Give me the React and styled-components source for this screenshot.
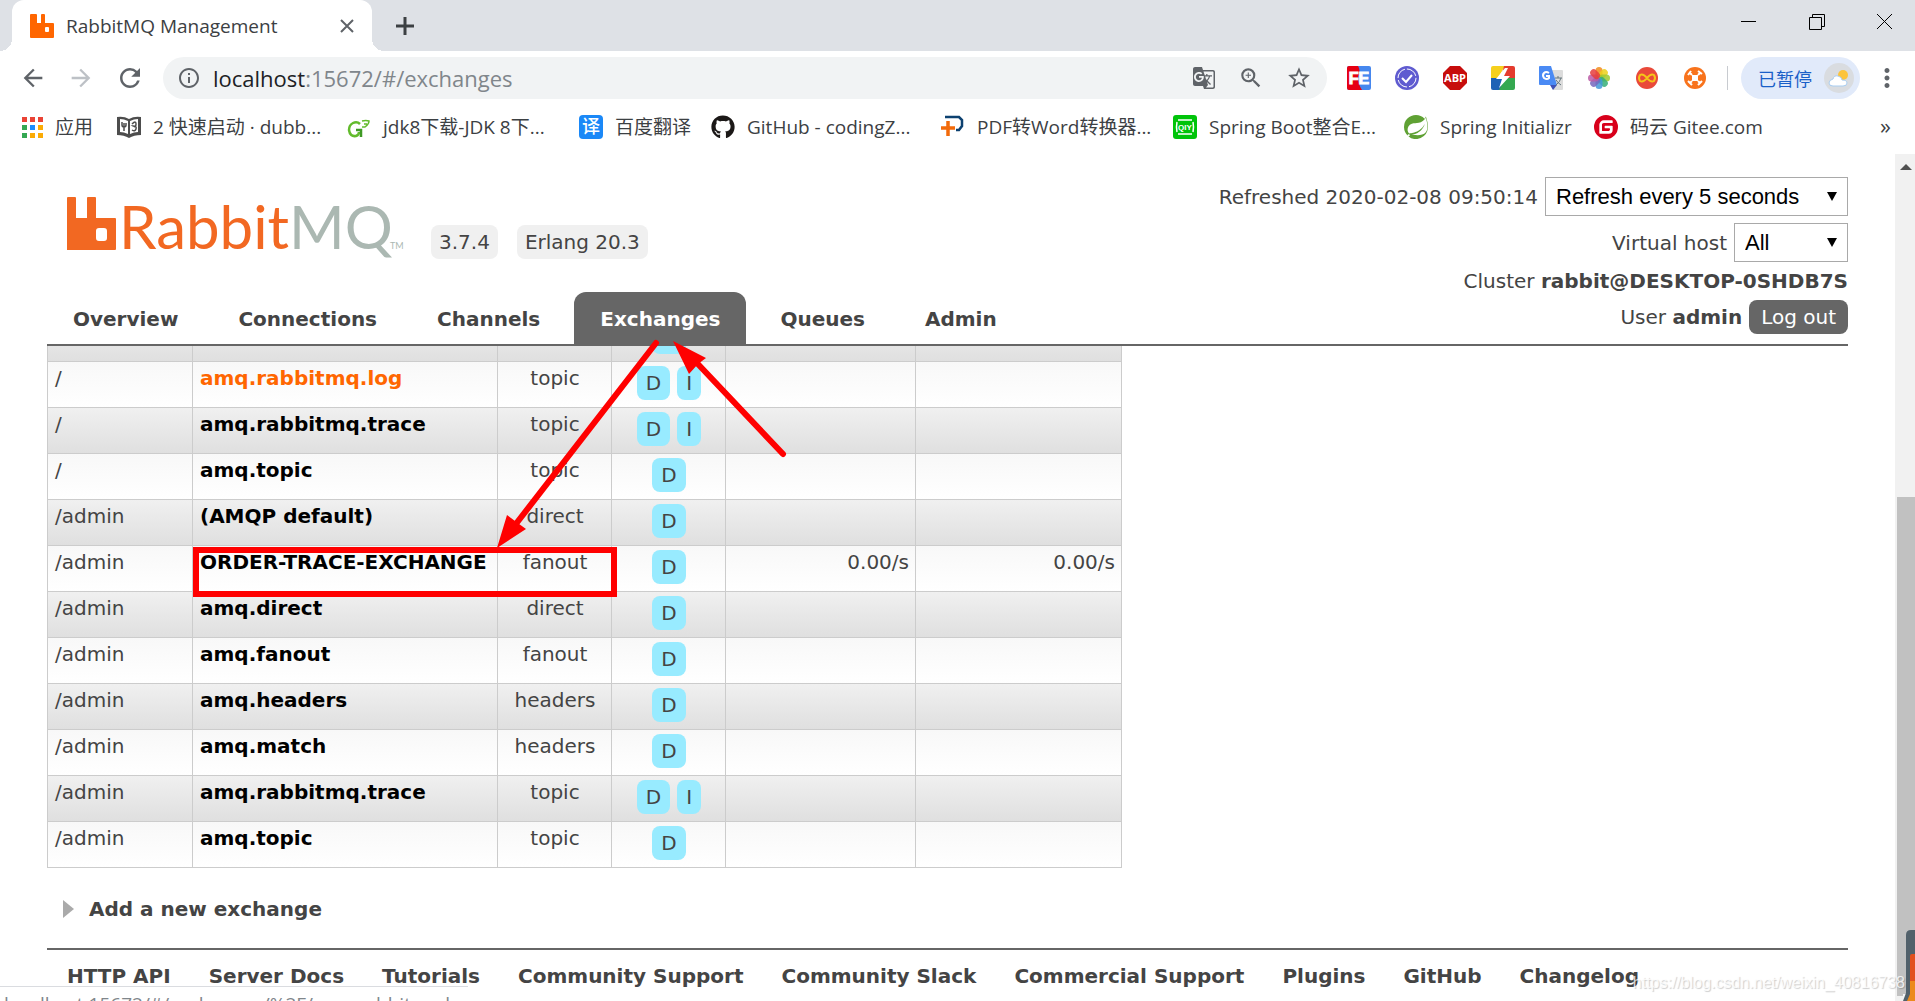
import React from 'react'
import styled, { createGlobalStyle } from 'styled-components';
import { FaGithub } from 'react-icons/fa';
import { SiSpring, SiGitee } from 'react-icons/si';
import { MdGTranslate, MdStarBorder, MdOutlineZoomIn, MdRefresh, MdArrowBack, MdArrowForward, MdInfoOutline, MdMoreVert } from 'react-icons/md';


const exchanges = [
    { vhost: '/', name: 'amq.match', type: 'headers', flags: ['D'] },
    { vhost: '/', name: 'amq.rabbitmq.log', type: 'topic', flags: ['D', 'I'], hover: true },
    { vhost: '/', name: 'amq.rabbitmq.trace', type: 'topic', flags: ['D', 'I'] },
    { vhost: '/', name: 'amq.topic', type: 'topic', flags: ['D'] },
    { vhost: '/admin', name: '(AMQP default)', type: 'direct', flags: ['D'] },
    { vhost: '/admin', name: 'ORDER-TRACE-EXCHANGE', type: 'fanout', flags: ['D'], rateIn: '0.00/s', rateOut: '0.00/s' },
    { vhost: '/admin', name: 'amq.direct', type: 'direct', flags: ['D'] },
    { vhost: '/admin', name: 'amq.fanout', type: 'fanout', flags: ['D'] },
    { vhost: '/admin', name: 'amq.headers', type: 'headers', flags: ['D'] },
    { vhost: '/admin', name: 'amq.match', type: 'headers', flags: ['D'] },
    { vhost: '/admin', name: 'amq.rabbitmq.trace', type: 'topic', flags: ['D', 'I'] },
    { vhost: '/admin', name: 'amq.topic', type: 'topic', flags: ['D'] },
];

const tabs = ['Overview', 'Connections', 'Channels', 'Exchanges', 'Queues', 'Admin'];

const footerLinks = ['HTTP API', 'Server Docs', 'Tutorials', 'Community Support', 'Community Slack', 'Commercial Support', 'Plugins', 'GitHub', 'Changelog'];

const RabbitIcon = () => (
    <svg width="24" height="24" viewBox="0 0 24 24">
        <path fill="#ff6600" fillRule="evenodd" d="M1 0h5q1 0 1 1v8h4V1q0-1 1-1h2q1 0 1 1v8h8q1 0 1 1v13q0 1-1 1H1q-1 0-1-1V1q0-1 1-1zM15 14v3q0 1 1 1h2q1 0 1-1v-3q0-1-1-1h-2q-1 0-1 1z"/>
    </svg>
);

const AppsIcon = () => (
    <svg width="21" height="21" viewBox="0 0 21 21">
        {['#ea4335', '#ea4335', '#ea4335', '#34a853', '#1a8cff', '#fbab05', '#34a853', '#fbab05', '#fbab05'].map((color, index) => (
            <rect key={index} x={(index % 3) * 8} y={Math.floor(index / 3) * 8} width="5" height="5" fill={color}/>
        ))}
    </svg>
);

const BookIcon = () => (
    <svg width="24" height="24" viewBox="0 0 24 24" fill="none" stroke="#4d4d4d">
        <path fill="#4d4d4d" stroke="none" d="M0 2q7-1 12 2 5-3 12-2v18q-7 0-12 3-5-3-12-3z"/>
        <path fill="#fff" stroke="none" d="M3 4q4 0 8 2v13q-4-2-8-2zM21 4q-4 0-8 2v13q4-2 8-2z"/>
        <path strokeWidth="1.500" d="M5 7v3q0 2 2 2t2-2V8M7 8v8M15 9q4-4 4 0t-3 2q4 0 3 3t-4 1"/>
    </svg>
);

const GreenGIcon = () => (
    <svg width="24" height="24" viewBox="0 0 24 24" fill="none" stroke="#62bb2c">
        <path strokeWidth="2.500" d="M13 9Q10 6 6 8t-4 7q1 7 7 6 3-1 3-4"/>
        <path strokeWidth="2.500" stroke="#3f9a25" d="M9 15h5v7"/>
        <path strokeWidth="1.500" d="M15 12h3q4-3 4-6-3-1-7 0M17 9h3"/>
    </svg>
);

const FanyiIcon = () => (
    <svg width="24" height="24" viewBox="0 0 24 24">
        <rect width="24" height="24" rx="4" fill="#1a88f7"/>
        <text x="12" y="18" fontSize="18" fontWeight="500" fill="#fff" textAnchor="middle" fontFamily="'Noto Sans CJK SC', sans-serif">译</text>
    </svg>
);

const PdfIcon = () => (
    <svg width="24" height="24" viewBox="0 0 24 24" fill="none">
        <path stroke="#0d4170" strokeWidth="2.500" d="M4 2h14l3 3v6l-3 4h-3"/>
        <path stroke="#f26a0a" strokeWidth="3.500" d="M7 6v15M0 13h14"/>
    </svg>
);

const QiyiIcon = () => (
    <svg width="24" height="24" viewBox="0 0 24 24">
        <rect width="24" height="24" rx="3" fill="#00c40a"/>
        <path fill="none" stroke="#fff" strokeWidth="1.500" d="M5 5h14M5 19h14M4 7Q3 12 4 17M20 7q1 5 0 10"/>
        <text x="12" y="15" fontSize="8" fontWeight="700" fill="#fff" textAnchor="middle" fontFamily="'Liberation Sans', sans-serif">QIY</text>
    </svg>
);

const FeIcon = () => (
    <svg width="24" height="24" viewBox="0 0 24 24">
        <rect width="24" height="24" rx="2" fill="#4687ee"/>
        <path fill="#e60012" d="M2 0h9q3 4 0 11 0 7 4 13H2q-2 0-2-2V2q0-2 2-2z"/>
        <text x="12" y="18" fontSize="16" fontWeight="700" fill="#fff" stroke="#fff" textAnchor="middle" fontFamily="'Liberation Sans', sans-serif">FE</text>
    </svg>
);

const CheckIcon = () => (
    <svg width="24" height="24" viewBox="0 0 24 24" fill="none">
        <circle cx="12" cy="12" r="12" fill="#5f5bd0"/>
        <circle cx="12" cy="12" r="9" stroke="#fff" strokeDasharray="12 2"/>
        <path stroke="#fff" strokeWidth="2" d="M7 12l4 4 6-7"/>
    </svg>
);

const AbpIcon = () => (
    <svg width="24" height="24" viewBox="0 0 24 24">
        <path fill="#c70d0c" d="M7 0h10l7 7v10l-7 7H7l-7-7V7z"/>
        <text x="12" y="16" fontSize="11" fontWeight="700" fill="#fff" textAnchor="middle" fontFamily="'Open Sans', sans-serif">ABP</text>
    </svg>
);

const BoltIcon = () => (
    <svg width="24" height="24" viewBox="0 0 24 24">
        <path fill="#f6d01d" d="M2 0h12L7 12H0V2q0-2 2-2z"/>
        <path fill="#e43b2e" d="M13 0h9q2 0 2 2v10H10z"/>
        <path fill="#1d62b5" d="M0 12h14L9 24H2q-2 0-2-2z"/>
        <path fill="#35a850" d="M14 12h10v10q0 2-2 2H8z"/>
        <path fill="#fff" d="M14 2L5 13h6L8 22l11-12h-6l4-8z"/>
    </svg>
);

const TranslateIcon = () => (
    <svg width="24" height="24" viewBox="0 0 24 24">
        <path fill="#dcdcdc" d="M10 4h13q1 0 1 1v18q0 1-1 1H14z"/>
        <path fill="#3f51b5" d="M11 19h7l-4 5z"/>
        <path fill="#4a8af4" d="M1 0h11l6 19H1q-1 0-1-1V1q0-1 1-1z"/>
        <path fill="none" stroke="#fff" strokeWidth="2" d="M10 7Q7 5 5 7t0 5q3 2 5 0V10H7"/>
        <path fill="none" stroke="#65767d" d="M16 12h7M19 10v2M22 12q-1 4-5 7M17 14q2 3 5 5"/>
    </svg>
);

const FlowerIcon = () => (
    <svg width="24" height="24" viewBox="0 0 24 24">
        {['#f28c1c', '#ecd01a', '#9dc92f', '#35ae78', '#4398d8', '#7567bd', '#bb5aa6', '#e63d3d'].map((color, index) => (
            <rect key={color} x="8.500" y="1" width="7" height="11" rx="3.500" fill={color} opacity="0.85" transform={`rotate(${index * 45} 12 12)`}/>
        ))}
    </svg>
);

const InfinityIcon = () => (
    <svg width="24" height="24" viewBox="0 0 24 24">
        <circle cx="12" cy="12" r="11" fill="#e9493a"/>
        <path fill="none" stroke="#f5c518" strokeWidth="2" d="M12 12q-4-5-7-3-2 3 0 6 3 2 7-3 4-5 7-3 2 3 0 6-3 2-7-3z"/>
    </svg>
);

const DroneIcon = () => (
    <svg width="24" height="24" viewBox="0 0 24 24" fill="none" stroke="#fff" strokeWidth="2">
        <circle cx="12" cy="12" r="11" fill="#f8731c" stroke="none"/>
        <rect x="9" y="9" width="6" height="6" fill="#fff" stroke="none"/>
        <path d="M9 9L7 7M15 9l2-2M9 15l-2 2M15 15l2 2M5 9l3-4M15 5l4 3M5 15l4 4M15 19l4-4"/>
    </svg>
);

const WeatherIcon = () => (
    <svg width="30" height="30" viewBox="0 0 30 30">
        <circle cx="15" cy="15" r="15" fill="#d9dce0"/>
        <circle cx="19" cy="12" r="5" fill="#fcc43c"/>
        <path fill="#fff" stroke="#a9cdf0" d="M9 23q-4 0-4-3t4-4q1-4 5-3t4 4q5 0 5 3t-4 3z"/>
    </svg>
);

const RabbitLogo = () => (
    <svg width="340" height="66" viewBox="0 0 340 66" role="img" aria-label="RabbitMQ">
        <path fill="#f26822" fillRule="evenodd" d="M0 5q0-1 1-1h7q1 0 1 1v20h11V5q0-1 1-1h7q1 0 1 1v20h19q1 0 1 1v30q0 1-1 1H0zM29 38v7q0 3 3 3h5q3 0 3-3v-7q0-3-3-3h-5q-3 0-3 3z"/>
        <text x="52" y="56" fontSize="60" fontWeight="400" fill="#f26822" fontFamily="Lato, 'Liberation Sans', sans-serif">Rabbit<tspan fill="#abb8b2">MQ</tspan></text>
        <text x="323" y="56" fontSize="9" fill="#abb8b2" fontFamily="Lato, 'Liberation Sans', sans-serif">TM</text>
    </svg>
);

const bookmarks = [
    { icon: <AppsIcon/>, label: '应用', width: 38 },
    { icon: <BookIcon/>, label: '2 快速启动 · dubb...', width: 170 },
    { icon: <GreenGIcon/>, label: 'jdk8下载-JDK 8下...', width: 172 },
    { icon: <FanyiIcon/>, label: '百度翻译', width: 72 },
    { icon: <FaGithub size={24} color="#1b1817"/>, label: 'GitHub - codingZ...', width: 170 },
    { icon: <PdfIcon/>, label: 'PDF转Word转换器...', width: 172 },
    { icon: <QiyiIcon/>, label: 'Spring Boot整合E...', width: 171 },
    { icon: <SiSpring size={24} color="#5fa134"/>, label: 'Spring Initializr', width: 130 },
    { icon: <SiGitee size={24} color="#d8001b"/>, label: '码云 Gitee.com', width: 134 },
];

const extensions = [
    ['FE', <FeIcon/>],
    ['Tasks', <CheckIcon/>],
    ['Adblock Plus', <AbpIcon/>],
    ['Bolt', <BoltIcon/>],
    ['Google Translate', <TranslateIcon/>],
    ['Photos', <FlowerIcon/>],
    ['Infinity', <InfinityIcon/>],
    ['Drone', <DroneIcon/>],
];

const BrowserBar = () => {
    return (
        <header>
            <StTabStrip>
                <StBrowserTab>
                    <RabbitIcon/>
                    <StTabTitle>RabbitMQ Management</StTabTitle>
                    <StIconButton aria-label="Close tab">
                        <svg width="14" height="14" viewBox="0 0 14 14" stroke="#5f6368" strokeWidth="2"><path d="M1 1l12 12M13 1L1 13"/></svg>
                    </StIconButton>
                </StBrowserTab>
                <StNewTab aria-label="New tab">
                    <svg width="18" height="18" viewBox="0 0 18 18" stroke="#3c4043" strokeWidth="3"><path d="M9 0v18M0 9h18"/></svg>
                </StNewTab>
                <StWindowButtons>
                    <StIconButton aria-label="Minimize">
                        <svg width="16" height="16" viewBox="0 0 16 16"><path fill="#000" d="M0 7h15v1H0z"/></svg>
                    </StIconButton>
                    <StIconButton aria-label="Restore">
                        <svg width="16" height="16" viewBox="0 0 16 16" fill="none" stroke="#000"><path d="M.5 3.5h12v12H.5zM3.500 3.500v-3h12v12h-3"/></svg>
                    </StIconButton>
                    <StIconButton aria-label="Close">
                        <svg width="16" height="16" viewBox="0 0 16 16" stroke="#000"><path d="M0 0l15 15M15 0L0 15"/></svg>
                    </StIconButton>
                </StWindowButtons>
            </StTabStrip>
            <StToolbar>
                <StNavButtons>
                    <StIconButton aria-label="Back"><MdArrowBack size={28} color="#5f6368"/></StIconButton>
                    <StIconButton aria-label="Forward"><MdArrowForward size={28} color="#bdc1c6"/></StIconButton>
                    <StIconButton aria-label="Reload"><MdRefresh size={30} color="#5f6368"/></StIconButton>
                </StNavButtons>
                <StAddress>
                    <MdInfoOutline size={24} color="#5f6368"/>
                    <StUrl><b>localhost</b>:15672/#/exchanges</StUrl>
                    <StAddressIcons>
                        <StIconButton aria-label="Translate"><MdGTranslate size={24} color="#5f6368"/></StIconButton>
                        <StIconButton aria-label="Zoom"><MdOutlineZoomIn size={26} color="#5f6368"/></StIconButton>
                        <StIconButton aria-label="Bookmark"><MdStarBorder size={26} color="#5f6368"/></StIconButton>
                    </StAddressIcons>
                </StAddress>
                <StExtensions>
                    {extensions.map(([name, icon]) => (
                        <StIconButton key={name} aria-label={name}>{icon}</StIconButton>
                    ))}
                </StExtensions>
                <StDivider/>
                <StProfile>已暂停<WeatherIcon/></StProfile>
                <StIconButton aria-label="Menu"><MdMoreVert size={30} color="#5f6368"/></StIconButton>
            </StToolbar>
            <StBookmarks>
                {bookmarks.map((value) => (
                    <StBookmark key={value.label} href="#">
                        {value.icon}
                        <StBookmarkLabel $width={value.width}>{value.label}</StBookmarkLabel>
                    </StBookmark>
                ))}
                <StMore aria-label="More bookmarks">»</StMore>
            </StBookmarks>
        </header>
    );
}

const PageHeader = () => {
    return (
        <StHeader>
            <div>
                <StBrand>
                    <RabbitLogo/>
                    <StVersions>
                        <StVersion>3.7.4</StVersion>
                        <StVersion>Erlang 20.3</StVersion>
                    </StVersions>
                </StBrand>
                <StTabs>
                    {tabs.map((tab) => (
                        <StTab key={tab} href={`#/${tab.toLowerCase()}`} $active={tab === 'Exchanges'}>{tab}</StTab>
                    ))}
                </StTabs>
            </div>
            <StStatus>
                <StStatusRow>
                    <label htmlFor="refresh">Refreshed 2020-02-08 09:50:14</label>
                    <StSelectBox>
                        <StSelect id="refresh" $width="303px"><option>Refresh every 5 seconds</option></StSelect>
                        <StSelectArrow/>
                    </StSelectBox>
                </StStatusRow>
                <StStatusRow>
                    <label htmlFor="vhost">Virtual host</label>
                    <StSelectBox>
                        <StSelect id="vhost" $width="114px"><option>All</option></StSelect>
                        <StSelectArrow/>
                    </StSelectBox>
                </StStatusRow>
                <StStatusRow><span>Cluster <b>rabbit@DESKTOP-0SHDB7S</b></span></StStatusRow>
                <StStatusRow>
                    <span>User <b>admin</b></span>
                    <StLogout>Log out</StLogout>
                </StStatusRow>
            </StStatus>
        </StHeader>
    );
}

const ExchangeTable = () => {
    return (
        <StTable aria-label="Exchanges">
            <colgroup>
                <StCol $width="145px"/>
                <StCol $width="305px"/>
                <StCol $width="114px"/>
                <StCol $width="114px"/>
                <StCol $width="190px"/>
                <StCol $width="206px"/>
            </colgroup>
            <tbody>
                {exchanges.map((value, index) => (
                    <StRow key={index}>
                        <StCell>{value.vhost}</StCell>
                        <StCell><StName href="#/exchanges" $hover={value.hover}>{value.name}</StName></StCell>
                        <StCell $align="center">{value.type}</StCell>
                        <StCell>
                            <StFlags>
                                {value.flags.map((flag) => <StFlag key={flag}>{flag}</StFlag>)}
                            </StFlags>
                        </StCell>
                        <StCell $align="right">{value.rateIn}</StCell>
                        <StCell $align="right">{value.rateOut}</StCell>
                    </StRow>
                ))}
            </tbody>
        </StTable>
    );
}

const App = () => {
    return (
        <>
            <GlobalStyle/>
            <StWindow>
                <BrowserBar/>
                <StViewport>
                    <StPage>
                        <PageHeader/>
                        <StScrolled>
                            <ExchangeTable/>
                            <StSection>
                                <svg width="11" height="18" viewBox="0 0 11 18"><path fill="#aaa" d="M0 0l11 9L0 18z"/></svg>
                                Add a new exchange
                            </StSection>
                            <StFooter>
                                {footerLinks.map((link) => <StFooterLink key={link} href="#">{link}</StFooterLink>)}
                            </StFooter>
                        </StScrolled>
                    </StPage>
                    <StScrollbar>
                        <svg width="12" height="6" viewBox="0 0 12 6"><path fill="#505050" d="M6 0l6 6H0z"/></svg>
                        <StThumb/>
                    </StScrollbar>
                </StViewport>
                <StMarks width="800" height="620" viewBox="0 0 800 620" fill="none" stroke="#f00">
                    <path strokeWidth="6" strokeLinecap="round" d="M656 343L512 529M783 454L696 362"/>
                    <path fill="#f00" stroke="none" d="M497 548l10-33 8 6 11 8zM673 341l33 17-8 6-9 10z"/>
                    <rect x="196" y="550" width="418" height="44" strokeWidth="6"/>
                </StMarks>
                <StStatusBubble>localhost:15672/#/exchanges/%2F/amq.rabbitmq.log</StStatusBubble>
                <StWidget width="12" height="72" viewBox="0 0 12 72">
                    <path fill="#f4f4f4" d="M0 65h12v7H0z"/>
                    <path fill="#52616b" d="M3 6q0-5 5-5h4v71H0l3-8z"/>
                    <path fill="#e2501f" d="M7 27q0-2 2-2h3v47H7z"/>
                    <path fill="#ec8a1c" d="M7 52h5v20H4l3-7z"/>
                </StWidget>
                <StWatermark>https://blog.csdn.net/weixin_40816738</StWatermark>
            </StWindow>
        </>
    );
}


const GlobalStyle = createGlobalStyle`
    * {
        box-sizing: border-box;
    }
    body {
        margin : 0;
        background-color: white;
    }
    button {
        font: inherit;
        color: inherit;
        cursor: pointer;
    }
    a {
        text-decoration: none;
    }
`;

const StWindow = styled.div`
    position: relative;
    display: flex;
    flex-direction: column;
    height : 100vh;
    overflow: hidden;
    font-family: 'Open Sans', 'Noto Sans CJK SC', sans-serif;
    color : #3c4043;
`;

const StTabStrip = styled.div`
    display: flex;
    align-items: center;
    height : 51px;
    padding : 0 22px 0 12px;
    background-color: #dee1e6;
`;

const StBrowserTab = styled.div`
    position: relative;
    display: flex;
    align-items: center;
    gap : 12px;
    width : 360px;
    height : 51px;
    padding : 0 18px;
    border-radius: 12px 12px 0 0;
    background-color: white;

    /* curved feet of the tab */
    &::before, &::after {
        content: '';
        position: absolute;
        bottom : 0;
        width : 12px;
        height : 12px;
    }
    &::before {
        left : -12px;
        background: radial-gradient(circle at 0 0, #dee1e6 12px, white 12px);
    }
    &::after {
        right : -12px;
        background: radial-gradient(circle at 100% 0, #dee1e6 12px, white 12px);
    }
`;

const StTabTitle = styled.span`
    flex : 1;
    font-size: 19px;
    white-space: nowrap;
`;

const StIconButton = styled.button`
    display: flex;
    justify-content: center;
    align-items: center;
    padding : 0;
    border: none;
    background: none;
`;

const StNewTab = styled(StIconButton)`
    margin : 0 auto 0 24px;
`;

const StWindowButtons = styled.div`
    display: flex;
    gap : 52px;
    padding : 0 0 8px 0;
`;

const StToolbar = styled.div`
    display: flex;
    align-items: center;
    height : 54px;
    padding : 0 13px 0 19px;
`;

const StNavButtons = styled.div`
    display: flex;
    gap : 20px;
    margin : 0 18px 0 0;
`;

const StAddress = styled.div`
    display: flex;
    flex : 1;
    align-items: center;
    gap : 12px;
    height : 42px;
    padding : 0 15px 0 14px;
    border-radius: 21px;
    background-color: #f1f3f4;
`;

const StUrl = styled.span`
    flex : 1;
    font-size: 22px;
    line-height: 30px;
    color : #80868b;

    b {
        font-weight: 400;
        color : #202124;
    }
`;

const StAddressIcons = styled.div`
    display: flex;
    gap : 22px;
`;

const StExtensions = styled.div`
    display: flex;
    gap : 24px;
    margin : 0 20px;
`;

const StDivider = styled.div`
    width : 1px;
    height : 24px;
    margin : 0 13px 0 0;
    background-color: #c8cbd0;
`;

const StProfile = styled.button`
    display: flex;
    align-items: center;
    gap : 12px;
    height : 42px;
    margin : 0 12px 0 0;
    padding : 0 6px 0 17px;
    border: none;
    border-radius: 21px;
    background-color: #e1eafa;
    font-size: 18px;
    color : #1a5fc8;
`;

const StBookmarks = styled.nav`
    display: flex;
    align-items: center;
    gap : 24px;
    height : 49px;
    padding : 0 24px 5px 22px;
`;

const StBookmark = styled.a`
    display: flex;
    align-items: center;
    gap : 12px;
    color : #3c4043;
`;

const StBookmarkLabel = styled.span`
    width : ${props=>props.$width}px;
    font-size: 19px;
    line-height: 28px;
    white-space: nowrap;
`;

const StMore = styled.button`
    margin : 0 0 0 auto;
    padding : 0 0 4px 0;
    border: none;
    background: none;
    font-size: 22px;
    line-height: 24px;
`;

const StViewport = styled.div`
    display: flex;
    flex : 1;
    min-height : 0;
`;

const StPage = styled.div`
    display: flex;
    flex-direction: column;
    flex : 1;
    min-width : 0;
    padding : 0 47px;
    font-family: 'DejaVu Sans', Verdana, sans-serif;
    font-size: 20px;
    line-height: 24px;
    color : #444;
`;

const StHeader = styled.div`
    display: flex;
    justify-content: space-between;
    align-items: flex-end;
    height : 192px;
    border-bottom: 2px solid #666;
`;

const StBrand = styled.div`
    display: flex;
    align-items: flex-end;
    gap : 24px;
    margin : 0 0 33px 20px;
`;

const StVersions = styled.div`
    display: flex;
    gap : 19px;
`;

const StVersion = styled.span`
    padding : 5px 8px;
    border-radius: 8px;
    background-color: #f0f0f0;
`;

const StTabs = styled.nav`
    display: flex;
    gap : 8px;
`;

const StTab = styled.a`
    padding : 15px 26px 13px;
    border-radius: 12px 12px 0 0;
    background-color: ${props=>props.$active ? '#666' : 'transparent'};
    font-weight: 700;
    color : ${props=>props.$active ? 'white' : '#444'};
`;

const StStatus = styled.div`
    display: flex;
    flex-direction: column;
    gap : 7px;
    padding : 0 0 10px 0;
`;

const StStatusRow = styled.div`
    display: flex;
    justify-content: flex-end;
    align-items: center;
    gap : 7px;
`;

const StSelectBox = styled.div`
    position: relative;
    display: flex;
`;

const StSelect = styled.select`
    appearance: none;
    width : ${props=>props.$width};
    height : 39px;
    padding : 0 30px 0 10px;
    border: 1px solid #a9a9a9;
    border-radius: 0;
    background-color: white;
    font-family: 'Liberation Sans', Arial, sans-serif;
    font-size: 22px;
    color : black;
`;

const StSelectArrow = styled.span`
    position: absolute;
    top : 15px;
    right : 11px;
    border-top: 9px solid black;
    border-left: 5px solid transparent;
    border-right: 5px solid transparent;
    pointer-events: none;
`;

const StLogout = styled.button`
    padding : 5px 12px;
    border: none;
    border-radius: 8px;
    background-color: #666;
    color : white;
`;

const StScrolled = styled.main`
    flex : 1;
    min-height : 0;
    overflow: hidden;
`;

/* the list is scrolled, its first row is partly under the header */
const StTable = styled.table`
    width : 1075px;
    margin : -31px 0 0 0;
    table-layout: fixed;
    border-collapse: collapse;
`;

const StCol = styled.col`
    width : ${props=>props.$width};
`;

const StRow = styled.tr`
    background: linear-gradient(#f0f0f0, #dfdfdf);

    &:nth-child(even) {
        background: linear-gradient(#f8f8f8, #fff);
    }
`;

const StCell = styled.td`
    height : 46px;
    padding : 4px 6px 0 7px;
    border: 1px solid #ccc;
    vertical-align: top;
    text-align: ${props=>props.$align || 'left'};
`;

const StName = styled.a`
    font-weight: 700;
    color : ${props=>props.$hover ? '#f60' : 'black'};
`;

const StFlags = styled.div`
    display: flex;
    justify-content: center;
    gap : 7px;
`;

const StFlag = styled.span`
    padding : 5px 9px;
    border-radius: 8px;
    background-color: #98ebff;
`;

const StSection = styled.h2`
    display: flex;
    align-items: center;
    gap : 15px;
    margin : 29px 0 27px 16px;
    font-size: 20px;
    line-height: 24px;
`;

const StFooter = styled.footer`
    display: flex;
    gap : 38px;
    padding : 14px 20px;
    border-top: 2px solid #666;
`;

const StFooterLink = styled.a`
    font-weight: 700;
    white-space: nowrap;
    color : #444;
`;

const StScrollbar = styled.div`
    display: flex;
    flex-direction: column;
    align-items: center;
    width : 20px;
    padding : 10px 0 5px 2px;
    background-color: #f1f1f1;
`;

const StThumb = styled.div`
    width : 100%;
    height : 60%;
    margin : auto 0 0 0;
    background-color: #c1c1c1;
`;

const StMarks = styled.svg`
    position: absolute;
    top : 0;
    left : 0;
    pointer-events: none;
`;

const StStatusBubble = styled.div`
    position: absolute;
    left : 0;
    bottom : 0;
    width : 468px;
    height : 15px;
    padding : 5px 0 0 4px;
    overflow: hidden;
    border-top: 1px solid #dadce0;
    background-color: white;
    font-size: 19px;
    line-height: 24px;
    white-space: nowrap;
    color : #80868b;
`;

const StWidget = styled.svg`
    position: absolute;
    right : 0;
    bottom : 0;
`;

const StWatermark = styled.div`
    position: absolute;
    right : 10px;
    bottom : 8px;
    font-family: 'Liberation Sans', Arial, sans-serif;
    font-size: 16px;
    line-height: 20px;
    color : rgba(255,255,255,0.8);
    text-shadow: 1px 1px 1px rgba(0,0,0,0.2);
`;

export default App
